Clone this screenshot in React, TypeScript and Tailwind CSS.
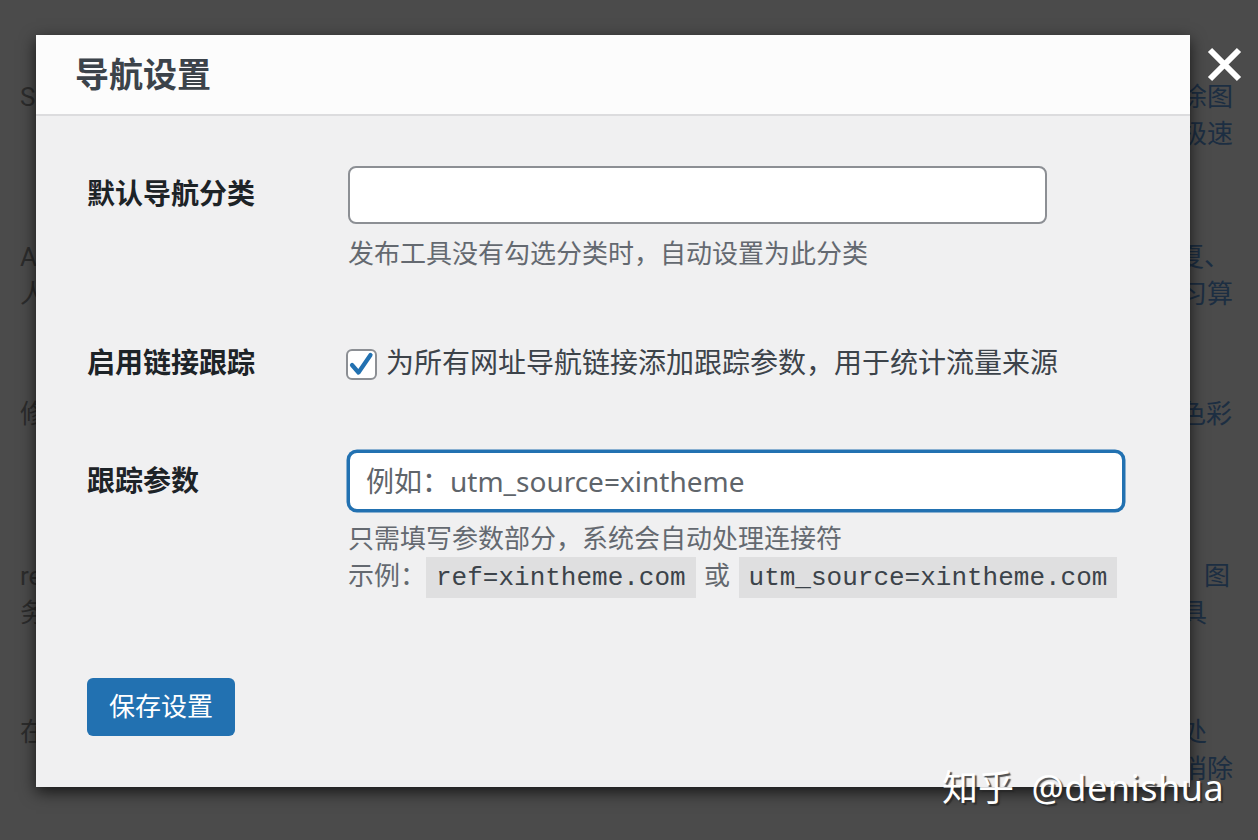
import React from "react";

type Line = { t: React.ReactNode; pr: string };

const bgRows: { h: string; left: string[]; right: Line[] }[] = [
  {
    h: "h-[160px]",
    left: ["SEO 标题与描述设置"],
    right: [
      { t: "文章配图自动裁剪与涂图", pr: "pr-[25px]" },
      { t: "图片懒加载，页面打开极速", pr: "pr-[25px]" },
    ],
  },
  {
    h: "h-[157px]",
    left: ["AI 智能写作助手", "人工校对与发布"],
    right: [
      { t: "支持文章摘要自动生成与重复夏、", pr: "pr-[28px]" },
      { t: "关键词提取，适合机器学习算", pr: "pr-[25px]" },
    ],
  },
  {
    h: "h-[162px]",
    left: ["修改主题配色方案"],
    right: [{ t: "自定义站点主色与辅助色彩", pr: "pr-[26px]" }],
  },
  {
    h: "h-[156px]",
    left: ["rel 链接属性设置", "务必检查外链"],
    right: [
      {
        t: (
          <>
            <span>为外部链接添加属性，防止盗用</span>
            <span className="ml-[20px]">图</span>
          </>
        ),
        pr: "pr-[28px]",
      },
      { t: "支持批量处理与检测工具", pr: "pr-[51px]" },
    ],
  },
  {
    h: "h-[160px]",
    left: ["在线更新主题文件"],
    right: [
      { t: "一键升级，自动替换旧文件处", pr: "pr-[51px]" },
      { t: "缓存文件可在后台手动清理消除", pr: "pr-[25px]" },
    ],
  },
];

function CheckBox() {
  return (
    <span className="flex h-[31px] w-[31px] shrink-0 items-center justify-center rounded-[6px] border-2 border-[#8c8f94] bg-white">
      <svg viewBox="0 0 27 27" className="h-[27px] w-[27px]">
        <polyline
          points="4,14 10.5,21.5 22.5,4"
          fill="none"
          stroke="#2271b1"
          strokeWidth="4.2"
          strokeLinecap="round"
          strokeLinejoin="round"
        />
      </svg>
    </span>
  );
}

export default function App() {
  const sans = "font-['Roboto','Noto_Sans_CJK_SC',sans-serif]";
  const code =
    "bg-[#dfdfe0] px-[10px] pb-[5px] pt-[6px] font-['Liberation_Mono',monospace] text-[26px] leading-none text-[#3c434a]";
  return (
    <div className={`relative h-[840px] w-[1258px] overflow-hidden bg-[#4b4b4b] ${sans}`}>
      {/* page behind the overlay */}
      <div className="flex flex-col pt-[79px] text-[26px] leading-[37px]">
        {bgRows.map((row, i) => (
          <div key={i} className={`flex justify-between ${row.h}`}>
            <div className="pl-[20px] text-[#2c2c2c]">
              {row.left.map((l) => (
                <div key={l} className="whitespace-nowrap">{l}</div>
              ))}
            </div>
            <div className="flex flex-col items-end text-[#1c2e42]">
              {row.right.map((r, j) => (
                <div key={j} className={`whitespace-nowrap ${r.pr}`}>{r.t}</div>
              ))}
            </div>
          </div>
        ))}
      </div>

      {/* modal */}
      <div className="absolute left-[36px] top-[35px] flex h-[752px] w-[1154px] flex-col bg-[#f0f0f1] shadow-[0_5px_15px_rgba(0,0,0,0.7)]">
        <div className="flex h-[81px] shrink-0 items-center border-b-2 border-[#dcdcde] bg-[#fcfcfc] pl-[39px] pt-[1px]">
          <h1 className="text-[34px] font-bold leading-none text-[#3c434a]">导航设置</h1>
        </div>

        <div className="flex flex-col pl-[51px] pt-[50px]">
          {/* row 1 */}
          <div className="grid grid-cols-[261px_1fr]">
            <div className="flex h-[58px] items-center text-[28px] font-bold text-[#1d2327]">默认导航分类</div>
            <div>
              <input
                type="text"
                className="block h-[58px] w-[699px] rounded-[8px] border-2 border-[#8c8f94] bg-white px-[16px] text-[28px] text-[#2c3338] outline-none"
              />
              <p className="mt-[11px] text-[26px] leading-[39px] text-[#646970]">
                发布工具没有勾选分类时，自动设置为此分类
              </p>
            </div>
          </div>

          {/* row 2 */}
          <div className="mt-[69px] grid grid-cols-[261px_1fr]">
            <div className="text-[28px] font-bold leading-[42px] text-[#1d2327]">启用链接跟踪</div>
            <label className="-ml-[2px] flex h-[42px] items-center gap-[9px] text-[28px] text-[#3c434a]">
              <CheckBox />
              <span>为所有网址导航链接添加跟踪参数，用于统计流量来源</span>
            </label>
          </div>

          {/* row 3 */}
          <div className="mt-[66px] grid grid-cols-[261px_1fr]">
            <div className="flex h-[61px] items-center text-[28px] font-bold text-[#1d2327]">跟踪参数</div>
            <div>
              <input
                type="text"
                placeholder="例如：utm_source=xintheme"
                className="block h-[60px] w-[776px] rounded-[9px] border-2 border-[#2271b1] bg-white px-[16px] font-['Noto_Sans','Noto_Sans_CJK_SC',sans-serif] text-[28px] text-[#2c3338] shadow-[0_0_0_1.5px_#2271b1] outline-none placeholder:text-[#5f656b]"
              />
              <p className="mt-[9px] text-[26px] leading-[39px] text-[#646970]">
                只需填写参数部分，系统会自动处理连接符
              </p>
              <p className="-mt-[2px] text-[26px] leading-[39px] text-[#646970]">
                示例：<code className={code}>ref=xintheme.com</code>
                <span className="mx-[2px]"> 或 </span>
                <code className={code}>utm_source=xintheme.com</code>
              </p>
            </div>
          </div>

          <div className="mt-[82px]">
            <button className="h-[58px] rounded-[6px] bg-[#2271b1] px-[22px] text-[26px] text-white">保存设置</button>
          </div>
        </div>
      </div>

      {/* close */}
      <button className="absolute left-[1207px] top-[47px] h-[35px] w-[35px]">
        <svg viewBox="0 0 35 35" className="h-[35px] w-[35px]">
          <path d="M3 3 L32 32 M32 3 L3 32" stroke="white" strokeWidth="6" fill="none" />
        </svg>
      </button>

      {/* watermark */}
      <div className="absolute left-[942px] top-[768px] whitespace-nowrap font-['Noto_Sans','Noto_Sans_CJK_SC',sans-serif] text-[36px] leading-[40px] text-white [text-shadow:2px_2px_1px_rgba(40,40,40,0.8)]">
        知乎 <span className="ml-[8px] tracking-[0.5px]">@denishua</span>
      </div>
    </div>
  );
}
